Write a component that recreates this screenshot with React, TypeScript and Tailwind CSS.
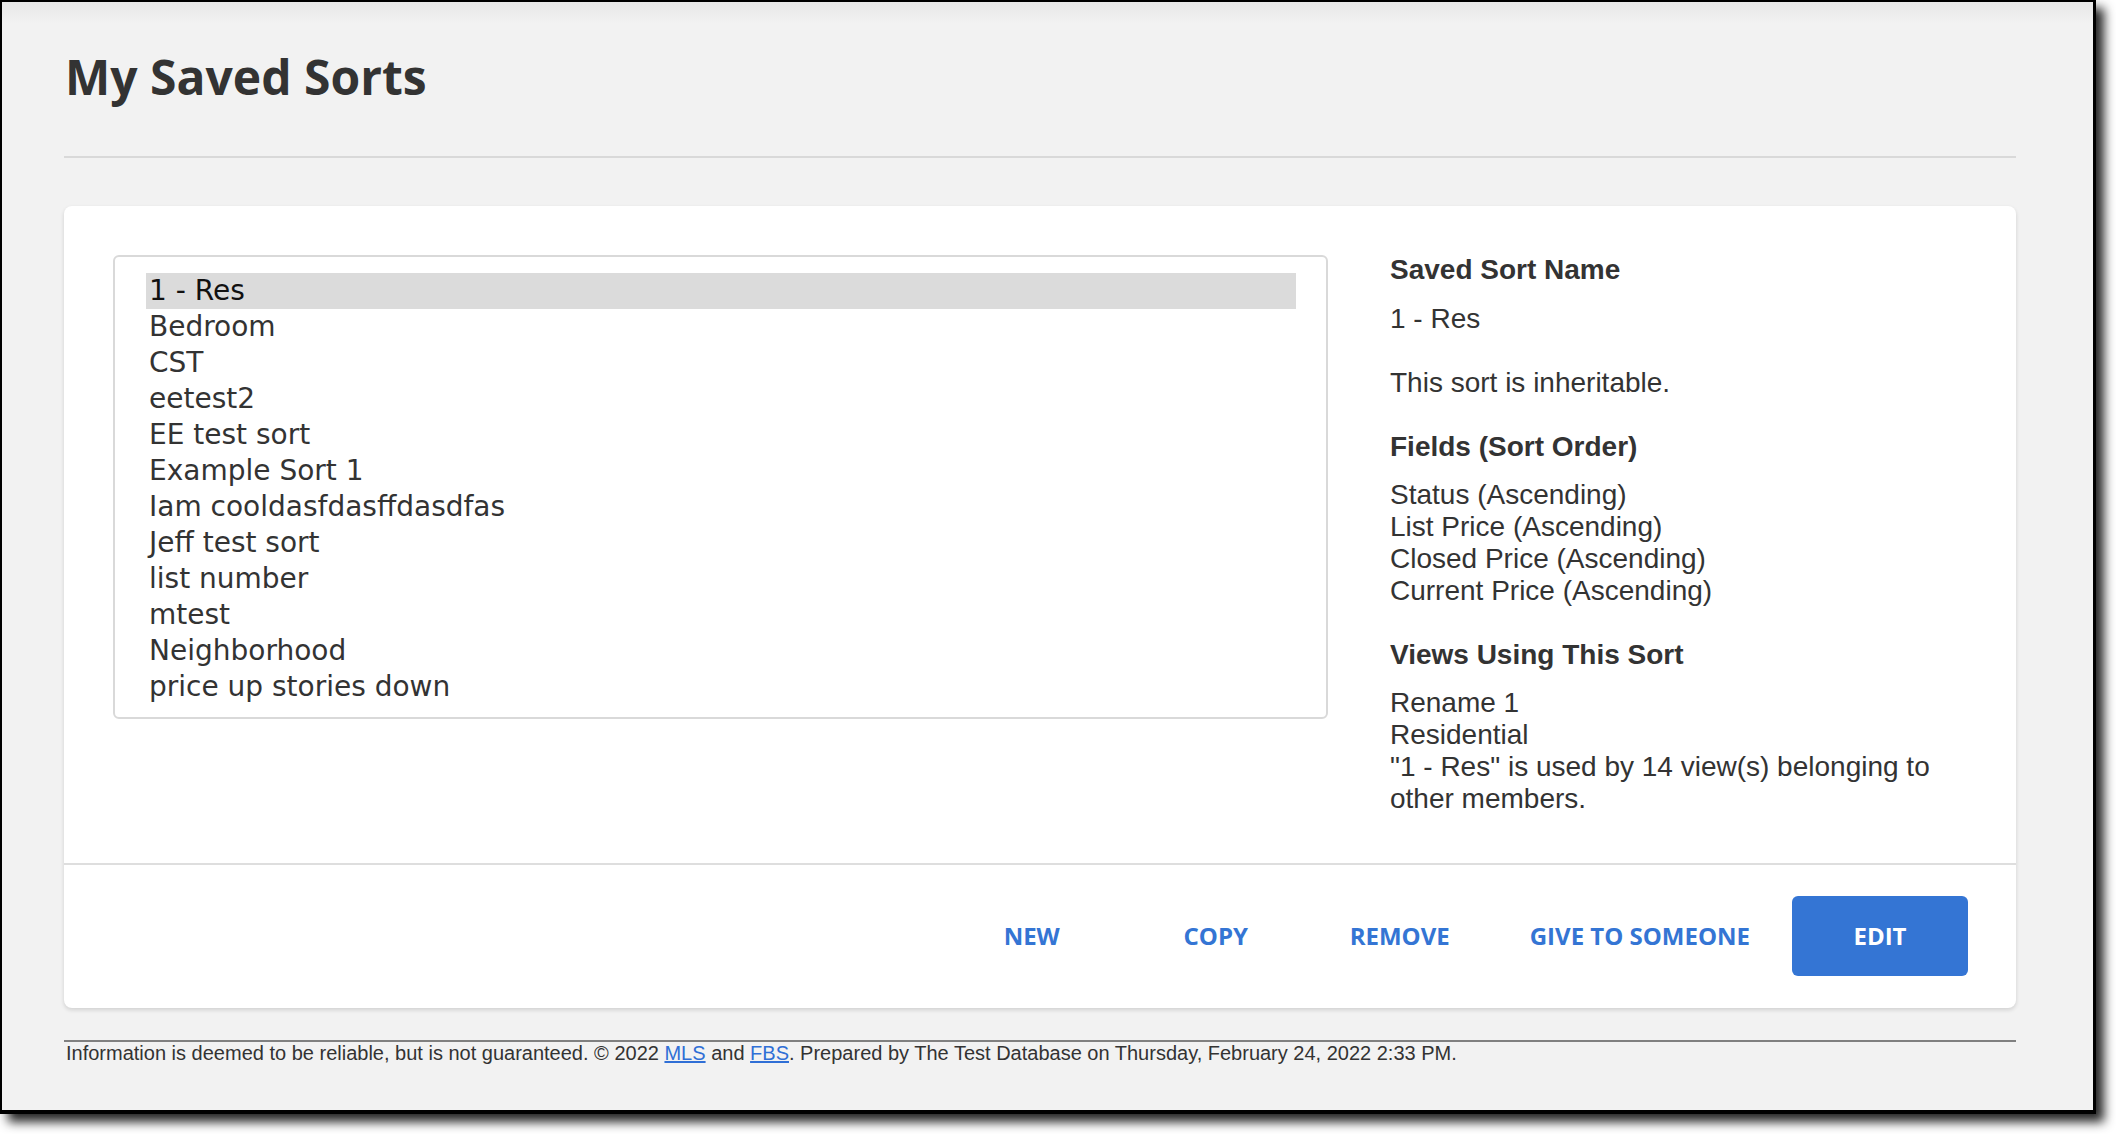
import React from "react";

const sorts = [
  "1 - Res",
  "Bedroom",
  "CST",
  "eetest2",
  "EE test sort",
  "Example Sort 1",
  "Iam cooldasfdasffdasdfas",
  "Jeff test sort",
  "list number",
  "mtest",
  "Neighborhood",
  "price up stories down",
];

export default function App() {
  return (
    <div className="w-[2116px] h-[1134px] bg-white">
      <div className="w-[2096px] h-[1114px] border-black border-t-2 border-l-2 border-r-[3px] border-b-4 shadow-[8px_8px_10px_rgba(0,0,0,0.85)] bg-[linear-gradient(to_bottom,#e8e8e8,#f2f2f2_22px)] overflow-hidden">
        <div className="w-[1952px] ml-[62px] pt-[41px]">
          <h1 className="font-['Open_Sans',sans-serif] font-bold text-[48px] leading-[67px] text-[#333333] pl-[1px]">
            My Saved Sorts
          </h1>
          <div className="mt-[46px] h-[2px] bg-[#d9d9d9]" />

          <div className="mt-[48px] bg-white rounded-[8px] shadow-[0_2px_4px_rgba(0,0,0,0.14)]">
            <div className="grid grid-cols-[1216px_1fr] gap-x-[60px] items-start p-[48px]">
              <div className="mt-[1px] ml-[1px] border-2 border-[#d9d9d9] rounded-[6px] pt-[16px] pb-[12px] pl-[31px] pr-[30px] font-['DejaVu_Sans',sans-serif] text-[28px] text-[#333333]">
                {sorts.map((s, i) => (
                  <div
                    key={s}
                    className={
                      i === 0
                        ? "h-[36px] leading-[36px] px-[3px] bg-[#dbdbdb] text-[#111111]"
                        : "h-[36px] leading-[36px] px-[3px]"
                    }
                  >
                    {s}
                  </div>
                ))}
              </div>

              <div className="pl-[2px] font-['Liberation_Sans',Arial,sans-serif] text-[28px] leading-[32px] text-[#333333]">
                <h3 className="font-bold mb-[17px]">Saved Sort Name</h3>
                <p>1 - Res</p>
                <p>&nbsp;</p>
                <p className="mb-[32px]">This sort is inheritable.</p>

                <h3 className="font-bold mb-[16px]">Fields (Sort Order)</h3>
                <div className="mb-[32px]">
                  <p>Status (Ascending)</p>
                  <p>List Price (Ascending)</p>
                  <p>Closed Price (Ascending)</p>
                  <p>Current Price (Ascending)</p>
                </div>

                <h3 className="font-bold mb-[16px]">Views Using This Sort</h3>
                <div>
                  <p>Rename 1</p>
                  <p>Residential</p>
                  <p>"1 - Res" is used by 14 view(s) belonging to other members.</p>
                </div>
              </div>
            </div>

            <div className="border-t-2 border-[#dedede] px-[48px] pt-[31px] pb-[32px] flex justify-end items-center gap-2 font-['Open_Sans',sans-serif] font-bold text-[24px]">
              <button className="min-w-[176px] h-[80px] px-[34px] rounded-[6px] text-[#3475d4] uppercase">
                New
              </button>
              <button className="min-w-[176px] h-[80px] px-[34px] rounded-[6px] text-[#3475d4] uppercase">
                Copy
              </button>
              <button className="min-w-[176px] h-[80px] px-[34px] rounded-[6px] text-[#3475d4] uppercase">
                Remove
              </button>
              <button className="min-w-[176px] h-[80px] px-[34px] rounded-[6px] text-[#3475d4] uppercase">
                Give to Someone
              </button>
              <button className="min-w-[176px] h-[80px] px-[34px] rounded-[6px] bg-[#3475d4] text-white uppercase">
                Edit
              </button>
            </div>
          </div>

          <div className="mt-[32px] border-t-2 border-[#808080] font-['Liberation_Sans',Arial,sans-serif] text-[20px] leading-[23px] text-[#333333] pl-[2px]">
            Information is deemed to be reliable, but is not guaranteed. © 2022{" "}
            <a className="text-[#2f6fd6] underline">MLS</a> and{" "}
            <a className="text-[#2f6fd6] underline">FBS</a>. Prepared by The Test Database on Thursday, February 24, 2022 2:33 PM.
          </div>
        </div>
      </div>
    </div>
  );
}
